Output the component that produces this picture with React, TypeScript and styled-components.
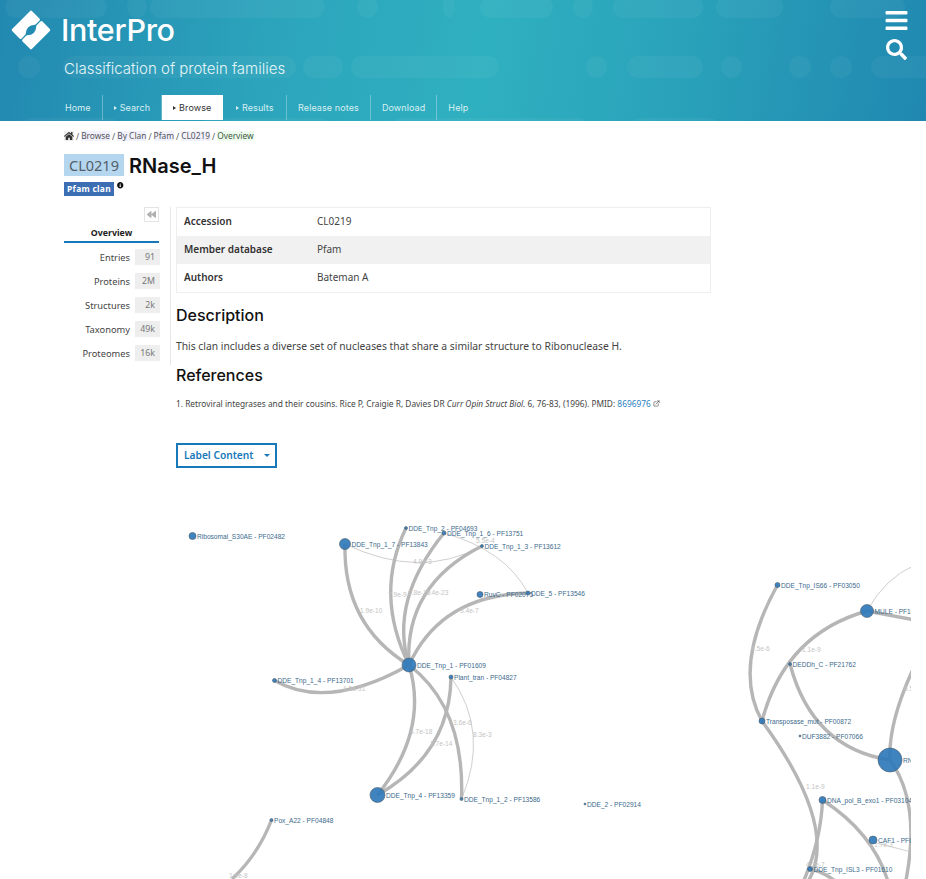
import React from "react";
import styled, { createGlobalStyle } from "styled-components";
import { FaBars, FaSearch, FaHome, FaInfoCircle, FaBackward } from "react-icons/fa";
import { LuExternalLink } from "react-icons/lu";

const GlobalStyle = createGlobalStyle`
  html, body {
    margin: 0;
    padding: 0;
    background: #fff;
    overflow: hidden;
    font-family: "Noto Sans", "Open Sans", sans-serif;
    color: #222;
  }
`;

const Masthead = styled.header`
  position: relative;
  height: 121px;
  overflow: hidden;
  background: linear-gradient(100deg, #2288b0 0%, #2ca5bc 30%, #2fb0c0 52%, #2aa3ba 72%, #2088b0 100%);
`;

const Bubbles = styled.svg`
  position: absolute;
  inset: 0;
`;

const Brand = styled.div`
  position: relative;
  display: flex;
  align-items: center;
  gap: 10px;
  padding: 10px 0 0 11px;
`;

const BrandName = styled.div`
  font-family: Inter, sans-serif;
  font-size: 30.5px;
  line-height: 40px;
  font-weight: 500;
  letter-spacing: -0.3px;
  color: #fff;
`;

const Tagline = styled.div`
  position: relative;
  margin: 9px 0 0 64px;
  font-family: Inter, sans-serif;
  font-size: 15px;
  line-height: 20px;
  font-weight: 300;
  color: #e6f5f8;
`;

const Tabs = styled.nav`
  position: relative;
  display: flex;
  margin: 16px 0 0 54px;
  height: 25px;
`;

const Tab = styled.a<{ $active?: boolean; $last?: boolean; $pad?: number }>`
  display: flex;
  align-items: center;
  gap: 3px;
  padding: 0 ${(p) => p.$pad ?? 11}px;
  font-family: Inter, sans-serif;
  font-size: 9px;
  letter-spacing: 0.1px;
  color: ${(p) => (p.$active ? "#333" : "#d8eff3")};
  background: ${(p) => (p.$active ? "#fff" : "transparent")};
  border-right: ${(p) => (p.$last ? "none" : "1px solid rgba(255,255,255,0.3)")};
`;

const Caret = styled.span<{ $active?: boolean }>`
  width: 0;
  height: 0;
  border-style: solid;
  border-width: 2.5px 0 2.5px 3px;
  border-color: transparent transparent transparent ${(p) => (p.$active ? "#333" : "#d8eff3")};
`;

const HeadIcons = styled.div`
  position: absolute;
  top: 8px;
  right: 17px;
  display: flex;
  flex-direction: column;
  align-items: center;
  gap: 6px;
  color: #fff;
  font-size: 25px;
  line-height: 0;
`;

const Page = styled.main`
  padding: 0 0 0 64px;
`;

const Crumbs = styled.div`
  display: flex;
  align-items: center;
  gap: 2px;
  height: 30px;
  font-size: 8.4px;
  color: #555;
`;

const Crumb = styled.span<{ $tint: string; $ink?: string }>`
  background: ${(p) => p.$tint};
  color: ${(p) => p.$ink || "#555"};
  line-height: 10px;
  display: inline-flex;
  align-items: center;
`;

const TitleRow = styled.div`
  display: flex;
  align-items: center;
  gap: 5px;
  margin-top: 3px;
  height: 22px;
`;

const Accession = styled.span`
  display: block;
  width: 60px;
  height: 22px;
  line-height: 22px;
  text-align: center;
  background: #b4d6ee;
  color: #55606a;
  font-size: 14.5px;
`;

const Title = styled.h1`
  margin: 0;
  padding-top: 1px;
  font-family: Inter, sans-serif;
  font-size: 20px;
  font-weight: 600;
  color: #111;
`;

const BadgeRow = styled.div`
  display: flex;
  align-items: flex-start;
  gap: 3px;
  margin-top: 6px;
  height: 14px;
`;

const Badge = styled.span`
  display: block;
  width: 50px;
  height: 14px;
  line-height: 14px;
  text-align: center;
  background: #3c6eb4;
  color: #fff;
  font-size: 8.4px;
  font-weight: 700;
  letter-spacing: 0.3px;
`;

const InfoMark = styled.span`
  font-size: 6.5px;
  line-height: 0;
  color: #111;
`;

const Columns = styled.div`
  display: flex;
  margin-top: 11px;
`;

const Side = styled.aside`
  width: 107px;
  height: 158px;
  box-sizing: border-box;
  padding-right: 11px;
  border-right: 1px solid #e8e8e8;
`;

const Collapse = styled.div`
  display: flex;
  align-items: center;
  justify-content: center;
  margin-left: auto;
  width: 15px;
  height: 15px;
  box-sizing: border-box;
  border: 1px solid #e4e4e4;
  color: #b0b0b0;
  font-size: 9px;
`;

const OverviewTab = styled.div`
  width: 95px;
  height: 18px;
  margin: 3px 0 6px;
  box-sizing: border-box;
  padding-top: 1px;
  text-align: center;
  line-height: 15px;
  font-size: 8.8px;
  font-weight: 700;
  border-bottom: 2px solid #1779ba;
  color: #222;
`;

const NavRow = styled.div`
  display: flex;
  align-items: center;
  justify-content: flex-end;
  gap: 5px;
  height: 16px;
  margin: 0 -1px 8px 0;
  font-size: 9.3px;
  color: #444;
`;

const Count = styled.span`
  display: block;
  width: 25px;
  height: 16px;
  box-sizing: border-box;
  padding-right: 5px;
  line-height: 16px;
  text-align: right;
  background: #eee;
  color: #777;
  font-size: 8.8px;
`;

const Content = styled.section`
  width: 535px;
  margin-left: 5px;
`;

const InfoTable = styled.div`
  border: 1px solid #eee;
`;

const InfoRow = styled.div<{ $shaded?: boolean }>`
  display: flex;
  align-items: center;
  height: 28px;
  box-sizing: border-box;
  padding: 0 0 2px 7px;
  font-size: 10px;
  background: ${(p) => (p.$shaded ? "#f1f1f1" : "#fff")};
`;

const InfoKey = styled.span`
  width: 133px;
  font-weight: 600;
  color: #333;
`;

const InfoValue = styled.span`
  color: #444;
`;

const SectionHead = styled.h2<{ $first?: boolean }>`
  margin: ${(p) => (p.$first ? "12px" : "0")} 0 0;
  font-family: Inter, sans-serif;
  font-size: 16px;
  line-height: 20px;
  font-weight: 500;
  color: #111;
`;

const Body = styled.p`
  margin: 13px 0 10px;
  height: 17px;
  font-size: 10.3px;
  line-height: 17px;
  color: #444;
  white-space: nowrap;
`;

const RefLine = styled.p`
  margin: 13px 0 0;
  font-size: 8.35px;
  line-height: 12px;
  color: #444;
  white-space: nowrap;
`;

const RefLink = styled.a`
  color: #2a7fbf;
`;

const LabelButton = styled.div`
  display: flex;
  align-items: center;
  justify-content: space-between;
  width: 101px;
  height: 25px;
  box-sizing: border-box;
  margin-top: 33px;
  padding: 0 5px 1px 6px;
  border: 2px solid #1779ba;
  color: #1779ba;
  font-size: 10.2px;
  font-weight: 600;
`;

const DownCaret = styled.span`
  width: 0;
  height: 0;
  border-style: solid;
  border-width: 3.5px 3.5px 0 3.5px;
  border-color: #1779ba transparent transparent transparent;
`;

const GraphFrame = styled.div`
  width: 735px;
  margin-left: 112px;
  margin-top: 12px;
  line-height: 0;
  overflow: hidden;
`;

const NodeLabel = styled.text`
  font-family: "Liberation Sans", Arial, sans-serif;
  font-size: 6.6px;
  fill: #3b6a8c;
`;

const EdgeLabel = styled.text`
  font-family: "Liberation Sans", Arial, sans-serif;
  font-size: 6.6px;
  fill: #c4c4c4;
`;

const bubbleRows: [number, number, number][] = [
  [-4, 5, 107], [-4, 127, 147], [-4, 150, 325], [-4, 357, 378], [-4, 443, 455], [-4, 480, 553],
  [-4, 573, 593], [-4, 613, 703], [-4, 716, 783], [-4, 830, 905],
  [56, 18, 40], [56, 63, 296], [56, 303, 343], [56, 351, 499], [56, 586, 607], [56, 627, 703],
  [56, 721, 742], [56, 789, 811], [56, 830, 852], [56, 871, 960],
  [118, 20, 120], [118, 200, 330], [118, 390, 590], [118, 630, 720],
];

const nodes: [number, number, number, string][] = [
  [192.5, 536, 3.5, "Ribosomal_S30AE - PF02482"],
  [345, 544, 5.5, "DDE_Tnp_1_7 - PF13843"],
  [406, 528, 1.5, "DDE_Tnp_2 - PF04693"],
  [444, 533, 2, "DDE_Tnp_1_6 - PF13751"],
  [482, 546, 1.5, "DDE_Tnp_1_3 - PF13612"],
  [480, 594.5, 3, "RuvC - PF02075"],
  [528, 593, 2, "DDE_5 - PF13546"],
  [409, 665, 7, "DDE_Tnp_1 - PF01609"],
  [451, 677, 2, "Plant_tran - PF04827"],
  [274.5, 680.5, 2, "DDE_Tnp_1_4 - PF13701"],
  [377.5, 795, 7.5, "DDE_Tnp_4 - PF13359"],
  [461.5, 799, 1.5, "DDE_Tnp_1_2 - PF13586"],
  [585, 804, 1, "DDE_2 - PF02914"],
  [271.5, 820, 1.5, "Pox_A22 - PF04848"],
  [777.5, 585, 2.5, "DDE_Tnp_IS66 - PF03050"],
  [867, 611, 6.5, "MULE - PF10551"],
  [790, 664, 1.5, "DEDDh_C - PF21762"],
  [762, 721, 3, "Transposase_mut - PF00872"],
  [800, 736, 1, "DUF3882 - PF07066"],
  [890, 760, 12, "RNase_H - PF00075"],
  [822.5, 800, 3.5, "DNA_pol_B_exo1 - PF03104"],
  [873, 840, 4, "CAF1 - PF04857"],
  [810, 869, 2.5, "DDE_Tnp_ISL3 - PF01610"],
];

const thickEdges = [
  "M345 544 Q343 625 409 665",
  "M406 528 Q374 594 409 665",
  "M444 533 Q389 601 409 665",
  "M482 546 Q404 585 409 665",
  "M528 593 Q441 595 409 665",
  "M274.5 680.5 Q328 711 409 665",
  "M409 665 Q429 730 377.5 795",
  "M451 677 Q450 754 377.5 795",
  "M409 665 Q465 708 461.5 799",
  "M271.5 820 Q258 855 232 879",
  "M777.5 585 Q732 667 762 721",
  "M867 611 Q785 634 762 721",
  "M790 664 Q812 748 890 760",
  "M762 721 Q842 831 806 885",
  "M822.5 800 Q821 841 802 885",
  "M822.5 800 Q875 834 889 885",
  "M810 869 Q825 872 840 885",
  "M867 611 L915 620",
  "M890 760 Q888 722 915 665",
  "M890 760 Q922 804 905 885",
];

const thinEdges = [
  "M345 544 Q420 580 482 546",
  "M444 533 Q505 550 528 593",
  "M451 677 Q490 732 461.5 799",
  "M867 611 Q885 578 915 565",
  "M873 842 L915 853",
];

const edgeLabels: [number, number, string][] = [
  [413, 564, "4.9e-3"], [476, 543, "5.5e-4"], [360, 613, "1.9e-10"], [388, 597, "7.9e-9"],
  [408, 595, "6.8e-10"], [426, 595, "9.4e-23"], [460, 613, "3.4e-7"], [343, 691, "1.5e-31"],
  [410, 734, "4.7e-18"], [430, 746, "2.7e-14"], [453, 725, "3.6e-6"], [473, 737, "8.3e-3"],
  [229, 878, "1.9e-8"], [751, 651, "4.5e-6"], [802, 652, "1.1e-9"], [806, 789, "1.1e-9"],
  [904, 691, "6.5e-5"], [874, 847, "1.7e-3"], [806, 867, "4.2e-7"],
];

const logoHalf = "M20 2.2 L27.4 9.6 L23.8 13.2 Q13.7 13.7 13.2 23.8 L9.6 27.4 L2.2 20 Z";

const App: React.FC = () => {
  return (
    <>
      <GlobalStyle />
      <Masthead>
        <Bubbles width="926" height="121">
          {bubbleRows.map(([y, a, b], i) => (
            <rect key={i} x={a} y={y} width={b - a} height={22} rx={11} fill="rgba(255,255,255,0.045)" />
          ))}
        </Bubbles>
        <Brand>
          <svg width="40" height="40" viewBox="0 0 40 40">
            <path d={logoHalf} fill="#fff" stroke="#fff" strokeWidth="3" strokeLinejoin="round" />
            <path
              d={logoHalf}
              fill="#fff"
              stroke="#fff"
              strokeWidth="3"
              strokeLinejoin="round"
              transform="rotate(180 20 20)"
            />
          </svg>
          <BrandName>InterPro</BrandName>
        </Brand>
        <Tagline>Classification of protein families</Tagline>
        <Tabs>
          <Tab>Home</Tab>
          <Tab><Caret />Search</Tab>
          <Tab $active><Caret $active />Browse</Tab>
          <Tab $pad={12.5}><Caret />Results</Tab>
          <Tab>Release notes</Tab>
          <Tab>Download</Tab>
          <Tab $last>Help</Tab>
        </Tabs>
        <HeadIcons>
          <FaBars />
          <FaSearch size={21} />
        </HeadIcons>
      </Masthead>
      <Page>
        <Crumbs>
          <Crumb $tint="#eee"><FaHome size={10} color="#333" /></Crumb>
          <span>/</span>
          <Crumb $tint="#f1f0fd">Browse</Crumb>
          <span>/</span>
          <Crumb $tint="#f1f0fd">By Clan</Crumb>
          <span>/</span>
          <Crumb $tint="#f1f0fd">Pfam</Crumb>
          <span>/</span>
          <Crumb $tint="#f1f0fd">CL0219</Crumb>
          <span>/</span>
          <Crumb $tint="#ecfbec" $ink="#3f5a46">Overview</Crumb>
        </Crumbs>
        <TitleRow>
          <Accession>CL0219</Accession>
          <Title>RNase_H</Title>
        </TitleRow>
        <BadgeRow>
          <Badge>Pfam clan</Badge>
          <InfoMark><FaInfoCircle /></InfoMark>
        </BadgeRow>
        <Columns>
          <Side>
            <Collapse><FaBackward /></Collapse>
            <OverviewTab>Overview</OverviewTab>
            <NavRow>Entries<Count>91</Count></NavRow>
            <NavRow>Proteins<Count>2M</Count></NavRow>
            <NavRow>Structures<Count>2k</Count></NavRow>
            <NavRow>Taxonomy<Count>49k</Count></NavRow>
            <NavRow>Proteomes<Count>16k</Count></NavRow>
          </Side>
          <Content>
            <InfoTable>
              <InfoRow><InfoKey>Accession</InfoKey><InfoValue>CL0219</InfoValue></InfoRow>
              <InfoRow $shaded><InfoKey>Member database</InfoKey><InfoValue>Pfam</InfoValue></InfoRow>
              <InfoRow><InfoKey>Authors</InfoKey><InfoValue>Bateman A</InfoValue></InfoRow>
            </InfoTable>
            <SectionHead $first>Description</SectionHead>
            <Body>This clan includes a diverse set of nucleases that share a similar structure to Ribonuclease H.</Body>
            <SectionHead>References</SectionHead>
            <RefLine>
              1. Retroviral integrases and their cousins. Rice P, Craigie R, Davies DR <em>Curr Opin Struct Biol.</em> 6,
              76-83, (1996). PMID: <RefLink>8696976</RefLink> <LuExternalLink size={7} />
            </RefLine>
            <LabelButton>Label Content<DownCaret /></LabelButton>
          </Content>
        </Columns>
        <GraphFrame>
          <svg width="735" height="399" viewBox="176 480 735 399">
            {thinEdges.map((d, i) => (
              <path key={i} d={d} fill="none" stroke="#cfcfcf" strokeWidth={1} />
            ))}
            {thickEdges.map((d, i) => (
              <path key={i} d={d} fill="none" stroke="#b6b6b6" strokeWidth={3.4} />
            ))}
            {edgeLabels.map(([x, y, t], i) => (
              <EdgeLabel key={i} x={x} y={y}>{t}</EdgeLabel>
            ))}
            {nodes.map(([x, y, r, name], i) => (
              <g key={i}>
                <circle cx={x} cy={y} r={r} fill="#2f7ab8" fillOpacity={0.92} stroke="#4a5a68" strokeWidth={0.6} />
                <NodeLabel x={x + r + 1} y={y + 2.5}>{name}</NodeLabel>
              </g>
            ))}
          </svg>
        </GraphFrame>
      </Page>
    </>
  );
};

export default App;
